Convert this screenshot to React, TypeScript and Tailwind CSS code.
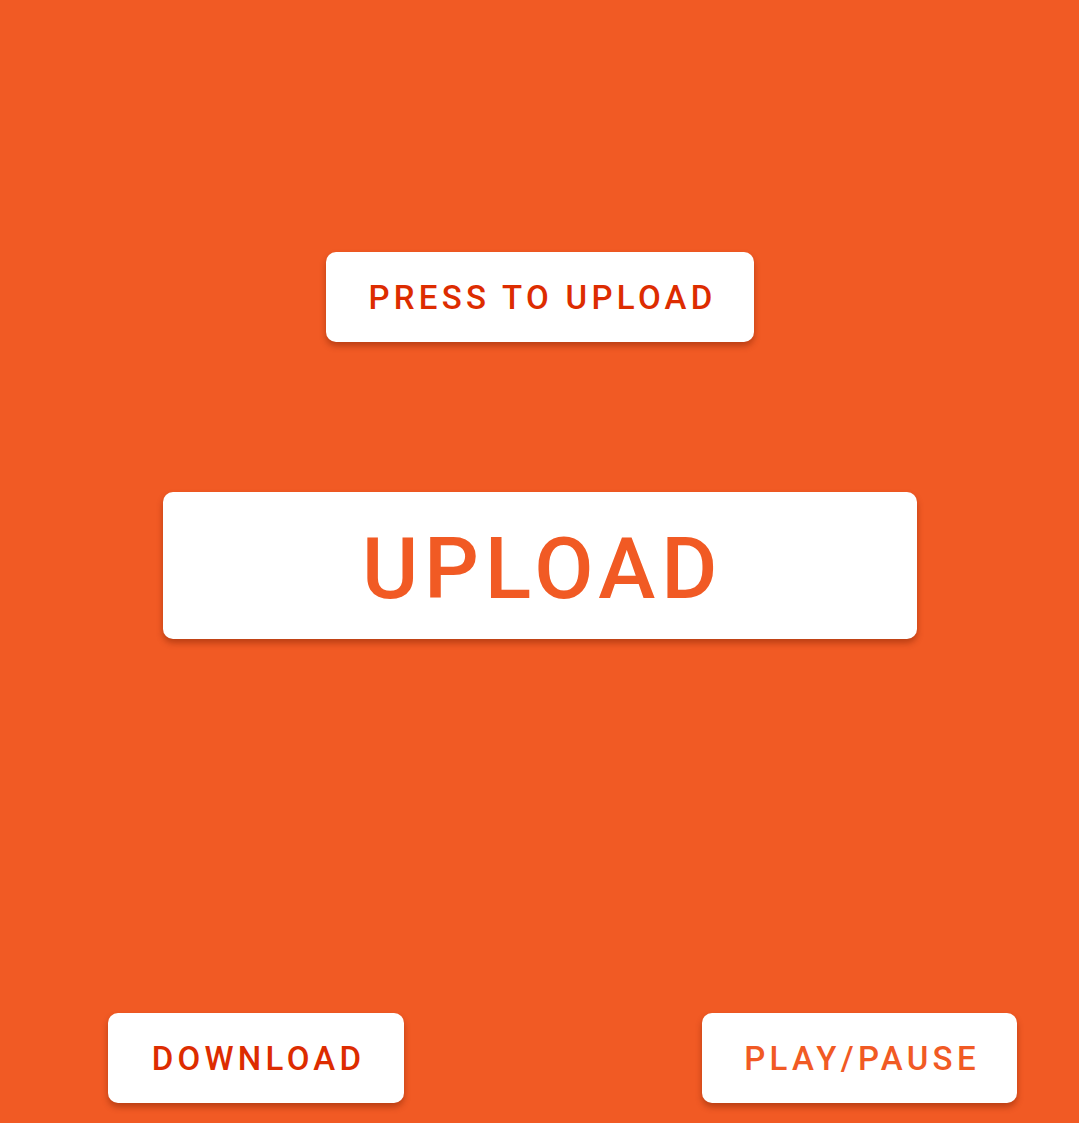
// App.tsx
// Upload / playback control screen with large material-style buttons.

const font = { fontFamily: "Roboto, 'Liberation Sans', sans-serif" };

export default function App() {
    return (
        <div
            className="flex h-[1123px] w-full flex-col items-center bg-[#f15a24] pt-[252px] pb-[20px]"
            style={font}
        >
            {/* Small upload trigger */}
            <button className="flex h-[90px] w-[428px] items-center justify-center rounded-[10px] bg-white pt-[2px] pl-[6px] text-[33px] font-[460] uppercase tracking-[4.3px] text-[#dd2c00] shadow-[0_4px_6px_rgba(120,30,0,0.45)]">
                Press to upload
            </button>

            {/* Big upload button */}
            <button className="mt-[150px] flex h-[147px] w-[754px] items-center justify-center rounded-[10px] bg-white pt-[6px] pl-[6px] text-[86px] font-medium uppercase tracking-[5.8px] text-[#f15a24] shadow-[0_4px_6px_rgba(120,30,0,0.45)]">
                Upload
            </button>

            {/* Bottom controls */}
            <div className="mt-auto flex w-full justify-between pl-[108px] pr-[62px]">
                <button className="flex h-[90px] w-[296px] items-center justify-center rounded-[10px] bg-white pt-[2px] pl-[5px] text-[33px] font-[460] uppercase tracking-[4.3px] text-[#dd2c00] shadow-[0_4px_6px_rgba(120,30,0,0.45)]">
                    Download
                </button>
                <button className="flex h-[90px] w-[315px] items-center justify-center rounded-[10px] bg-white pt-[2px] pl-[5px] text-[33px] font-[460] uppercase tracking-[4.3px] text-[#f15a24] shadow-[0_4px_6px_rgba(120,30,0,0.45)]">
                    Play/Pause
                </button>
            </div>
        </div>
    );
}
